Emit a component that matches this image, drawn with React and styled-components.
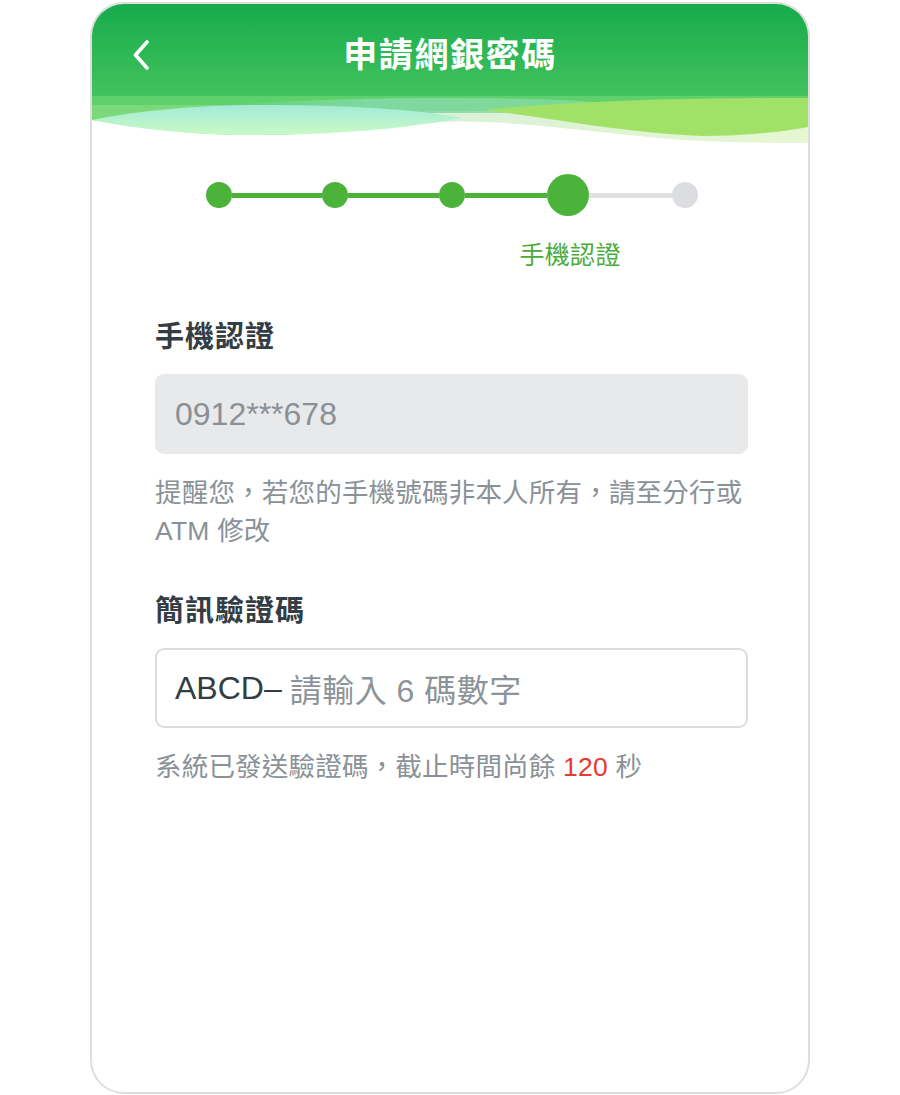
import React from "react";
import styled, { createGlobalStyle } from "styled-components";

const FONT = `"Liberation Sans", "Noto Sans CJK TC", sans-serif`;

const GlobalStyle = createGlobalStyle`
	html, body {
		margin: 0;
		padding: 0;
		background: #ffffff;
		font-family: ${FONT};
	}
	* {
		box-sizing: border-box;
	}
`;

const Page = styled.div`
	width: 900px;
	height: 1095px;
	padding-top: 2px;
	display: flex;
	justify-content: center;
`;

const Phone = styled.div`
	width: 720px;
	height: 1092px;
	border: 2px solid #dedede;
	border-radius: 34px;
	overflow: hidden;
	background: #ffffff;
	display: flex;
	flex-direction: column;
`;

const Header = styled.div`
	display: flex;
	flex-direction: column;
	background: linear-gradient(180deg, #17ab4b 0%, #38bd5a 50%, #5ccf6b 100%);
`;

const TitleBar = styled.div`
	height: 92px;
	padding: 10px 41px 0;
	display: grid;
	grid-template-columns: 1fr auto 1fr;
	align-items: center;
`;

const BackButton = styled.button`
	border: none;
	background: none;
	padding: 0;
	width: 16px;
	height: 30px;
	display: flex;
	align-items: center;
	cursor: pointer;
	justify-self: start;
`;

const Title = styled.h1`
	margin: 0;
	color: #ffffff;
	font-size: 34px;
	font-weight: 700;
	letter-spacing: 1.6px;
	line-height: 1;
`;

const Wave = styled.svg`
	display: block;
	width: 716px;
	height: 50px;
`;

const Content = styled.div`
	display: flex;
	flex-direction: column;
	padding: 28px 60px 0 63px;
`;

const Stepper = styled.div`
	display: flex;
	flex-direction: column;
	align-items: center;
`;

const Track = styled.div`
	width: 492px;
	display: flex;
	align-items: center;
	height: 42px;
`;

const Dot = styled.span`
	flex: none;
	width: ${(p) => (p.big ? 42 : 26)}px;
	height: ${(p) => (p.big ? 42 : 26)}px;
	border-radius: 50%;
	background: ${(p) => (p.done ? "#4bb23a" : "#dcdde0")};
`;

const Line = styled.span`
	flex: none;
	width: ${(p) => p.w}px;
	height: 5px;
	background: ${(p) => (p.done ? "#4bb23a" : "#e0e1e3")};
`;

const StepLabels = styled.div`
	width: 492px;
	margin-top: 24px;
	padding-left: 314px;
`;

const StepLabel = styled.span`
	display: block;
	width: 96px;
	text-align: center;
	white-space: nowrap;
	color: #4aab3a;
	font-size: 25px;
	line-height: 30px;
	letter-spacing: 0.3px;
`;

const Section = styled.div`
	display: flex;
	flex-direction: column;
	margin-top: ${(p) => p.mt}px;
`;

const Label = styled.div`
	color: #333d45;
	font-size: 29px;
	font-weight: 700;
	line-height: 36px;
	letter-spacing: 1px;
`;

const Field = styled.div`
	margin-top: 19px;
	height: 80px;
	border-radius: 9px;
	display: flex;
	align-items: center;
	padding: 0 18px;
	font-size: 32px;
	background: ${(p) => (p.disabled ? "#e8e9eb" : "#ffffff")};
	border: 2px solid ${(p) => (p.disabled ? "#e8e9eb" : "#dcdcdc")};
	color: ${(p) => (p.disabled ? "#8a9096" : "#333b43")};
`;

const Placeholder = styled.span`
	color: #8c9399;
	margin-left: 8px;
	letter-spacing: 0.5px;
`;

const Note = styled.p`
	margin: 20px 0 0;
	color: #8a9197;
	font-size: 26.5px;
	line-height: 38px;
	letter-spacing: 0.2px;
`;

const Seconds = styled.span`
	color: #e8392f;
`;

const steps = [
	{ done: true },
	{ done: true, line: 90.5 },
	{ done: true, line: 90.5 },
	{ done: true, line: 82.5, big: true },
	{ done: false, line: 82.5 },
];

function HeaderWave() {
	return (
		<Wave viewBox="0 0 716 50" preserveAspectRatio="none">
			<defs>
				<linearGradient id="teal" x1="0" x2="1" y1="0" y2="0">
					<stop offset="0" stopColor="#7ed9a2" stopOpacity="0" />
					<stop offset="0.35" stopColor="#7ed9a2" stopOpacity="1" />
					<stop offset="1" stopColor="#8fdca8" stopOpacity="0.6" />
				</linearGradient>
				<linearGradient id="lens" x1="0" x2="0" y1="0" y2="1">
					<stop offset="0" stopColor="#a2ebd6" />
					<stop offset="1" stopColor="#cafac6" />
				</linearGradient>
				<linearGradient id="pale" x1="0" x2="1" y1="0" y2="0">
					<stop offset="0" stopColor="#d9f0d8" />
					<stop offset="1" stopColor="#e6f7d2" />
				</linearGradient>
			</defs>
			<rect x="0" y="0" width="716" height="50" fill="#5ed06c" />
			<rect x="0" y="9" width="260" height="24" fill="#7cd97b" />
			<rect x="300" y="15" width="416" height="35" fill="url(#pale)" />
			<path d="M120,10 C220,2 360,0 470,4 C510,6 540,10 560,14 C500,17 420,17 350,17 C260,17 190,14 120,10 Z" fill="url(#teal)" />
			<path d="M390,14 C480,6 560,2 716,2 V31 C690,36 650,40 610,40 C520,36 450,20 390,14 Z" fill="#a2e168" />
			<path d="M0,24 C60,34 110,39 158,39 C240,39 300,29 348,26 C420,22 520,40 608,45 C660,47 700,47 716,47 V50 H0 Z" fill="#ffffff" />
			<path d="M0,24 C50,14 110,9 170,9 C260,9 330,14 370,22 L348,26 C280,36 220,39 158,39 C100,39 45,33 0,24 Z" fill="url(#lens)" />
		</Wave>
	);
}

export default function App() {
	return (
		<>
			<GlobalStyle />
			<Page>
				<Phone>
					<Header>
						<TitleBar>
							<BackButton aria-label="返回">
								<svg width="16" height="30" viewBox="0 0 16 30">
									<polyline
										points="14,2 2.5,15 14,28"
										fill="none"
										stroke="#ffffff"
										strokeWidth="3.6"
										strokeLinecap="round"
										strokeLinejoin="round"
									/>
								</svg>
							</BackButton>
							<Title>申請網銀密碼</Title>
							<span />
						</TitleBar>
						<HeaderWave />
					</Header>
					<Content>
						<Stepper>
							<Track>
								{steps.map((s, i) => (
									<React.Fragment key={i}>
										{s.line && <Line w={s.line} done={s.done} />}
										<Dot done={s.done} big={s.big} />
									</React.Fragment>
								))}
							</Track>
							<StepLabels>
								<StepLabel>手機認證</StepLabel>
							</StepLabels>
						</Stepper>

						<Section mt={49}>
							<Label>手機認證</Label>
							<Field disabled>0912***678</Field>
							<Note>提醒您，若您的手機號碼非本人所有，請至分行或 ATM 修改</Note>
						</Section>

						<Section mt={43}>
							<Label>簡訊驗證碼</Label>
							<Field>
								ABCD–<Placeholder>請輸入 6 碼數字</Placeholder>
							</Field>
							<Note>
								系統已發送驗證碼，截止時間尚餘 <Seconds>120</Seconds> 秒
							</Note>
						</Section>
					</Content>
				</Phone>
			</Page>
		</>
	);
}
